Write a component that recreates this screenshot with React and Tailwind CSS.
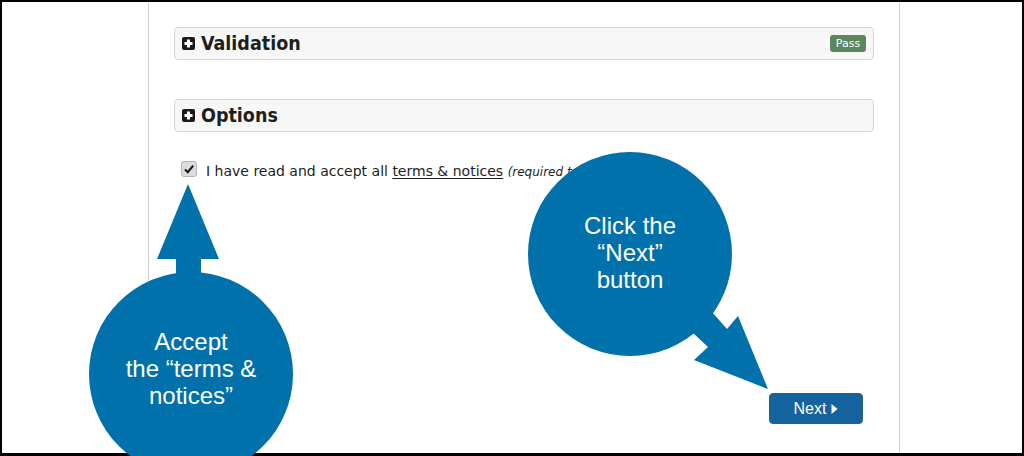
import React from "react";

function PlusBox() {
  return (
    <svg width="13" height="13" viewBox="0 0 13 13" className="shrink-0">
      <rect x="0" y="0" width="13" height="13" rx="2" fill="#1a1a1a" />
      <rect x="5" y="2.5" width="3" height="8" fill="#fff" />
      <rect x="2.5" y="5" width="8" height="3" fill="#fff" />
    </svg>
  );
}

function Panel({ title, badge }) {
  return (
    <div className="flex h-[33px] items-center rounded-[4px] border border-[#d6d6d6] bg-[#f7f7f7] pl-[7px] pr-[7px]">
      <PlusBox />
      <span className="ml-[6px] text-[19.5px] font-bold leading-none text-[#1e1e1e] [font-family:'DejaVu_Sans_Condensed','DejaVu_Sans',sans-serif] [font-stretch:condensed]">
        {title}
      </span>
      {badge && (
        <span className="ml-auto flex h-[17px] w-[36px] items-center justify-center rounded-[3px] bg-[#5a875d] text-[11px] leading-none text-white [font-family:'DejaVu_Sans',sans-serif]">
          {badge}
        </span>
      )}
    </div>
  );
}

export default function App() {
  return (
    <div className="relative h-[456px] w-[1024px] overflow-hidden bg-white">
      <div className="flex h-full w-full border-x-2 border-t-2 border-b-[3px] border-black">
        <div className="ml-[146px] flex h-full w-[752px] flex-col border-x border-[#cfcfcf] px-[25px] pt-[25px]">
          <Panel title="Validation" badge="Pass" />
          <div className="mt-[39px]">
            <Panel title="Options" />
          </div>
          <div className="mt-[29px] flex items-start pl-[7px]">
            <div className="flex h-[16px] w-[16px] shrink-0 items-center justify-center rounded-[3px] border border-[#b5b5b5] bg-[#dcdcdc]">
              <svg width="12" height="12" viewBox="0 0 12 12">
                <path d="M2 6.5 L4.8 9.2 L10.2 2.6" fill="none" stroke="#1c1c1c" strokeWidth="2.2" />
              </svg>
            </div>
            <div className="ml-[9px] mt-[2px] whitespace-nowrap text-[14px] leading-[16px] text-[#1e1e1e] [font-family:'DejaVu_Sans',sans-serif]">
              I have read and accept all{" "}
              <span className="underline decoration-[#1e1e1e] underline-offset-2">terms &amp; notices</span>{" "}
              <span className="text-[12px] italic">(required to continue)</span>
            </div>
          </div>
          <div className="mt-[213px] flex justify-end pr-[11px]">
            <button className="flex h-[31px] w-[94px] items-center justify-center rounded-[4px] border border-[#2f5f7f] bg-[#15639e] text-[16px] leading-none text-white [font-family:'Liberation_Sans',Arial,sans-serif]">
              Next
              <svg width="7" height="10" viewBox="0 0 7 10" className="ml-[5px]">
                <path d="M0.5 0 L6.5 5 L0.5 10 Z" fill="#fff" />
              </svg>
            </button>
          </div>
        </div>
      </div>

      {/* Callout overlays */}
      <svg
        className="pointer-events-none absolute left-0 top-0"
        width="1024"
        height="456"
        viewBox="0 0 1024 456"
      >
        <polygon
          points="188,184 219,259 201,259 201,292 176,292 176,259 157,259"
          fill="#0071aa"
        />
        <circle cx="191" cy="374" r="102" fill="#0071aa" />
        <polygon
          points="712,312 727,329 738,316 768,389 694,360 708,347 693,333"
          fill="#0071aa"
        />
        <circle cx="630" cy="254" r="102" fill="#0071aa" />
      </svg>
      <div className="absolute left-[91px] top-[328px] w-[200px] text-center text-[24px] leading-[27px] text-white [font-family:'Liberation_Sans',Arial,sans-serif]">
        Accept
        <br />
        the “terms &amp;
        <br />
        notices”
      </div>
      <div className="absolute left-[530px] top-[212px] w-[200px] text-center text-[24px] leading-[27px] text-white [font-family:'Liberation_Sans',Arial,sans-serif]">
        Click the
        <br />
        “Next”
        <br />
        button
      </div>
    </div>
  );
}
